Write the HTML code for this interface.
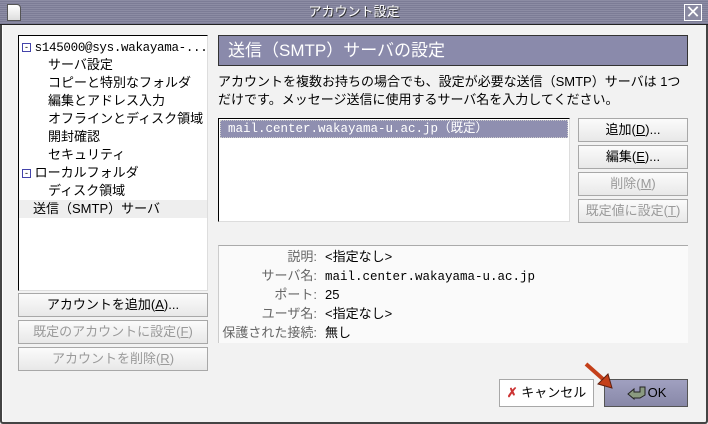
<!DOCTYPE html>
<html><head><meta charset="utf-8"><style>
*{margin:0;padding:0;box-sizing:border-box}
body{width:708px;height:424px;overflow:hidden;background:#f2f2f2;font-family:"Liberation Sans","Noto Sans CJK JP",sans-serif;font-size:13px;color:#000;position:relative}
.abs{position:absolute}
#title{left:0;top:0;width:708px;height:25px;background:repeating-linear-gradient(#8c8ca4 0 1px,#7c7c96 1px 2px);border-bottom:1px solid #222;color:#fff;text-align:center;line-height:24px;font-size:13px;text-shadow:1px 1px 0 #333}
#frame{left:0;top:25px;width:708px;height:399px;border:2px solid #444;border-top:none;border-radius:0 0 3px 3px;box-shadow:inset 1px 0 0 #fff}
.btn{position:absolute;background:linear-gradient(#fbfbfb,#e8e8e8);border:1px solid #a8a8a8;text-align:center;font-size:13px;line-height:21px}
.dis{color:#9a9a9a}
.tree div{height:18px;line-height:18px;white-space:nowrap}
.info div{height:19px;line-height:19px;white-space:nowrap}
.lab{display:inline-block;width:98px;text-align:right;color:#666;margin-right:8px}
u{text-decoration:underline}
.mono{font-family:"Liberation Mono","Noto Sans CJK JP",monospace;font-size:12.5px}
</style></head><body>
<div id="title" class="abs">アカウント設定</div>
<div class="abs" style="left:7px;top:4px;width:14px;height:17px;background:linear-gradient(#fff,#ddd);border:1px solid #555;border-radius:0 4px 0 0"></div>
<div class="abs" style="left:684px;top:4px;width:18px;height:17px;border:1px solid #fff;background:#8a8aa2;color:#fff;font-size:18px;line-height:15px;text-align:center">✕</div>
<div id="frame" class="abs"></div>

<div class="abs tree" style="left:18px;top:35px;width:190px;height:256px;background:#fff;border-left:1px solid #000;border-top:1px solid #000;border-right:1px solid #ddd;border-bottom:1px solid #ddd;padding-top:2px">
<div style="padding-left:3px"><span style="display:inline-block;width:9px;height:9px;border:1px solid #44a;font-size:9px;line-height:6px;text-align:center;vertical-align:1px">-</span> <span class="mono" style="letter-spacing:-0.3px">s145000@sys.wakayama-...</span></div>
<div style="padding-left:29px">サーバ設定</div>
<div style="padding-left:29px">コピーと特別なフォルダ</div>
<div style="padding-left:29px">編集とアドレス入力</div>
<div style="padding-left:29px">オフラインとディスク領域</div>
<div style="padding-left:29px">開封確認</div>
<div style="padding-left:29px">セキュリティ</div>
<div style="padding-left:3px"><span style="display:inline-block;width:9px;height:9px;border:1px solid #44a;font-size:9px;line-height:6px;text-align:center;vertical-align:1px">-</span> ローカルフォルダ</div>
<div style="padding-left:29px">ディスク領域</div>
<div style="padding-left:14px;background:#eee">送信（SMTP）サーバ</div>
</div>

<div class="btn" style="left:18px;top:293px;width:190px;height:24px">アカウントを追加(<u>A</u>)...</div>
<div class="btn dis" style="left:18px;top:320px;width:190px;height:24px">既定のアカウントに設定(<u>F</u>)</div>
<div class="btn dis" style="left:18px;top:347px;width:190px;height:24px">アカウントを削除(<u>R</u>)</div>

<div class="abs" style="left:218px;top:35px;width:470px;height:31px;background:#8a8aab;border:1px solid #333;color:#fff;font-size:17px;line-height:29px;padding-left:9px">送信（SMTP）サーバの設定</div>
<div class="abs" style="left:218px;top:73px;width:475px;line-height:18px;font-size:13px;white-space:nowrap">アカウントを複数お持ちの場合でも、設定が必要な送信（SMTP）サーバは 1つ<br>だけです。メッセージ送信に使用するサーバ名を入力してください。</div>

<div class="abs" style="left:218px;top:118px;width:352px;height:104px;background:#fff;border-left:1px solid #000;border-top:1px solid #000;border-right:1px solid #ddd;border-bottom:1px solid #ddd">
<div class="mono" style="margin:1px;height:18px;background:#8f8fb0;color:#fff;line-height:16px;padding-left:7px;border:1px dotted #ccc">mail.center.wakayama-u.ac.jp（既定）</div>
</div>
<div class="btn" style="left:578px;top:118px;width:110px;height:24px">追加(<u>D</u>)...</div>
<div class="btn" style="left:578px;top:145px;width:110px;height:24px">編集(<u>E</u>)...</div>
<div class="btn dis" style="left:578px;top:172px;width:110px;height:24px">削除(<u>M</u>)</div>
<div class="btn dis" style="left:578px;top:199px;width:110px;height:24px">既定値に設定(<u>T</u>)</div>

<div class="abs info" style="left:218px;top:245px;width:470px;height:98px;background:#fafafa;border-top:1px solid #aaa;border-left:1px solid #ccc;padding-top:1px">
<div><span class="lab">説明:</span>&lt;指定なし&gt;</div>
<div><span class="lab">サーバ名:</span><span class="mono">mail.center.wakayama-u.ac.jp</span></div>
<div><span class="lab">ポート:</span>25</div>
<div><span class="lab">ユーザ名:</span>&lt;指定なし&gt;</div>
<div><span class="lab">保護された接続:</span>無し</div>
</div>

<div class="btn" style="left:499px;top:379px;width:95px;height:28px;line-height:26px;background:#fff"><span style="color:#c33;font-weight:bold">✗</span> キャンセル</div>
<div class="btn" style="left:604px;top:379px;width:84px;height:28px;line-height:26px;background:linear-gradient(#a0a0c0,#8888a8);border-color:#555">
<svg width="22" height="16" style="vertical-align:-3px"><path d="M2 10 L8 5 L8 8 L14 8 L14 3 L19 3 L19 11 L14 14 L8 14 L8 15 Z" fill="#8a9a80" stroke="#222" stroke-width="1"/></svg>OK</div>
<svg class="abs" style="left:582px;top:360px" width="40" height="32"><path d="M4 4 L22 20" stroke="#c4401a" stroke-width="4"/><path d="M16 24 L30 28 L26 14 Z" fill="#c4401a" stroke="#602010"/></svg>
</body></html>
